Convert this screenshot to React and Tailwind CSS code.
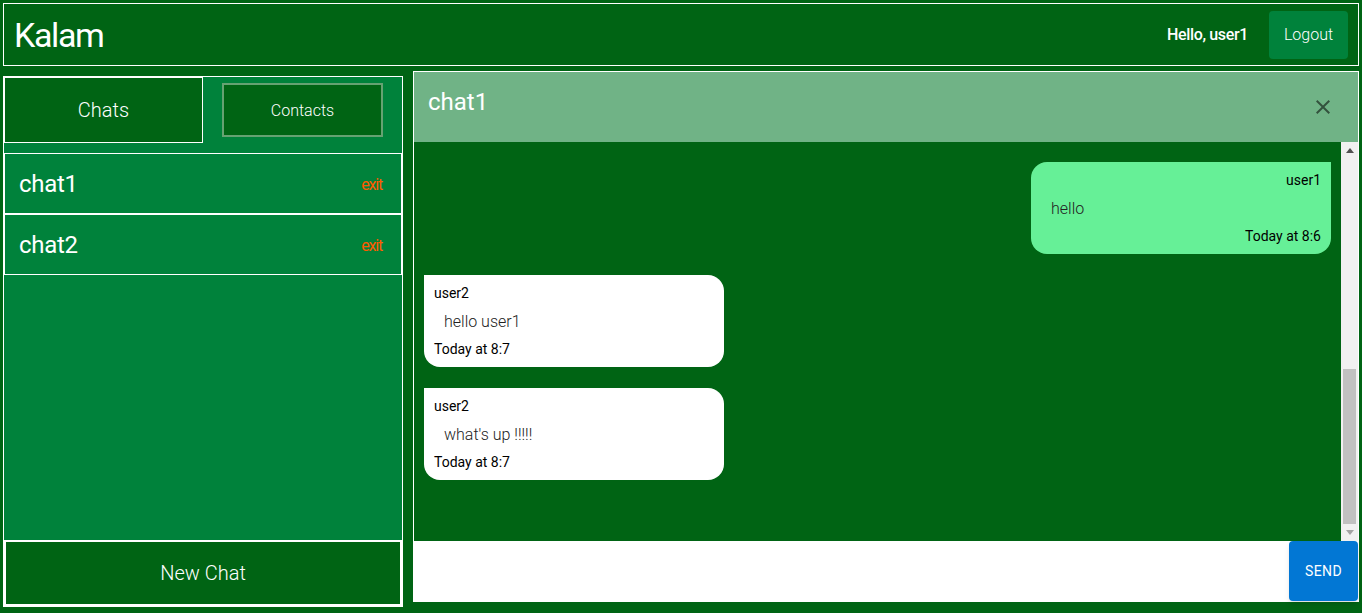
import React from "react";

function Bubble({ mine, name, text, time }) {
  return (
    <div
      className={`w-[300px] h-[92px] px-[10px] pt-[8px] pb-[8px] flex flex-col ${
        mine
          ? "self-end mr-[10px] bg-[#66f097] rounded-[16px] rounded-tr-none"
          : "self-start ml-[10px] bg-white rounded-[16px] rounded-tl-none"
      }`}
    >
      <div className={`h-[20px] leading-[20px] text-[14px] text-black ${mine ? "text-right" : ""}`}>{name}</div>
      <div className="h-[24px] mt-[7px] leading-[24px] text-[16px] font-light text-[#222] pl-[10px]">{text}</div>
      <div className={`h-[20px] mt-[5px] leading-[20px] text-[14px] text-black ${mine ? "text-right" : ""}`}>{time}</div>
    </div>
  );
}

export default function App() {
  return (
    <div className="w-[1362px] h-[613px] bg-[#006414] font-['Roboto',sans-serif] overflow-hidden">
      {/* Header */}
      <div className="mx-[3px] mt-[3px] h-[63px] border border-white flex items-center justify-between pl-[10px] pr-[10px]">
        <div className="text-white text-[34px] leading-[40px] tracking-[-1.4px]">Kalam</div>
        <div className="flex items-center gap-[21px]">
          <span className="text-white font-medium text-[16px] tracking-[-0.35px]">Hello, user1</span>
          <button className="w-[79px] h-[48px] rounded-[4px] bg-[#00823b] text-white font-light text-[16px]">Logout</button>
        </div>
      </div>

      <div className="flex items-start gap-[10px] ml-[3px]">
        {/* Left panel */}
        <div className="mt-[10px] w-[400px] h-[531px] border border-white bg-[#00823b] flex flex-col">
          <div className="h-[66px] flex">
            <div className="w-[199px] h-[66px] border border-white bg-[#006414] flex items-center justify-center text-white font-light text-[20px]">
              Chats
            </div>
            <div className="flex-1 flex items-center justify-center">
              <div className="w-[161px] h-[54px] border-2 border-white/40 bg-[#006414] flex items-center justify-center text-white font-light text-[16px] pt-[1px]">
                Contacts
              </div>
            </div>
          </div>
          <div className="mt-[10px] flex flex-col">
            {["chat1", "chat2"].map((c) => (
              <div key={c} className="h-[61px] border border-white flex items-center justify-between pl-[14px] pr-[19px]">
                <span className="text-white text-[24px] tracking-[-0.3px]">{c}</span>
                <span className="text-[#ff5a00] text-[16px] tracking-[-1.2px] mt-[3px]">exit</span>
              </div>
            ))}
          </div>
          <div className="flex-1" />
          <div className="h-[66px] border-2 border-white bg-[#006414] flex items-center justify-center text-white font-light text-[20px]">
            New Chat
          </div>
        </div>

        {/* Right panel */}
        <div className="mt-[5px] w-[946px] h-[531px] border border-white border-b-0 flex flex-col">
          <div className="h-[70px] bg-[#70b386] flex items-center justify-between pl-[14px] pr-[23px]">
            <span className="text-white text-[24px] -mt-[10px]">chat1</span>
            <svg width="24" height="24" viewBox="0 0 24 24">
              <path
                fill="rgba(0,0,0,0.54)"
                d="M19 6.41 17.59 5 12 10.59 6.41 5 5 6.41 10.59 12 5 17.59 6.41 19 12 13.41 17.59 19 19 17.59 13.41 12z"
              />
            </svg>
          </div>
          <div className="flex-1 flex bg-[#006414]">
            <div className="flex-1 flex flex-col pt-[20px] gap-[21px]">
              <Bubble mine name="user1" text="hello" time="Today at 8:6" />
              <Bubble name="user2" text="hello user1" time="Today at 8:7" />
              <Bubble name="user2" text="what's up !!!!!" time="Today at 8:7" />
            </div>
            {/* scrollbar */}
            <div className="w-[17px] bg-[#f1f1f1] flex flex-col items-center">
              <div className="h-[17px] flex items-center justify-center">
                <svg width="8" height="5" viewBox="0 0 8 5"><path d="M0 5 L4 0 L8 5z" fill="#505050" /></svg>
              </div>
              <div className="flex-1 w-full flex flex-col px-[2px]">
                <div className="flex-1" />
                <div className="h-[155px] w-full bg-[#c1c1c1]" />
              </div>
              <div className="h-[17px] flex items-center justify-center">
                <svg width="8" height="5" viewBox="0 0 8 5"><path d="M0 0 L8 0 L4 5z" fill="#a3a3a3" /></svg>
              </div>
            </div>
          </div>
          <div className="h-[61px] flex bg-white">
            <div className="flex-1" />
            <button className="w-[69px] h-[60px] bg-[#0277d4] rounded-[4px] text-white text-[14px] tracking-[0.4px] shadow-md">SEND</button>
          </div>
        </div>
      </div>
    </div>
  );
}
